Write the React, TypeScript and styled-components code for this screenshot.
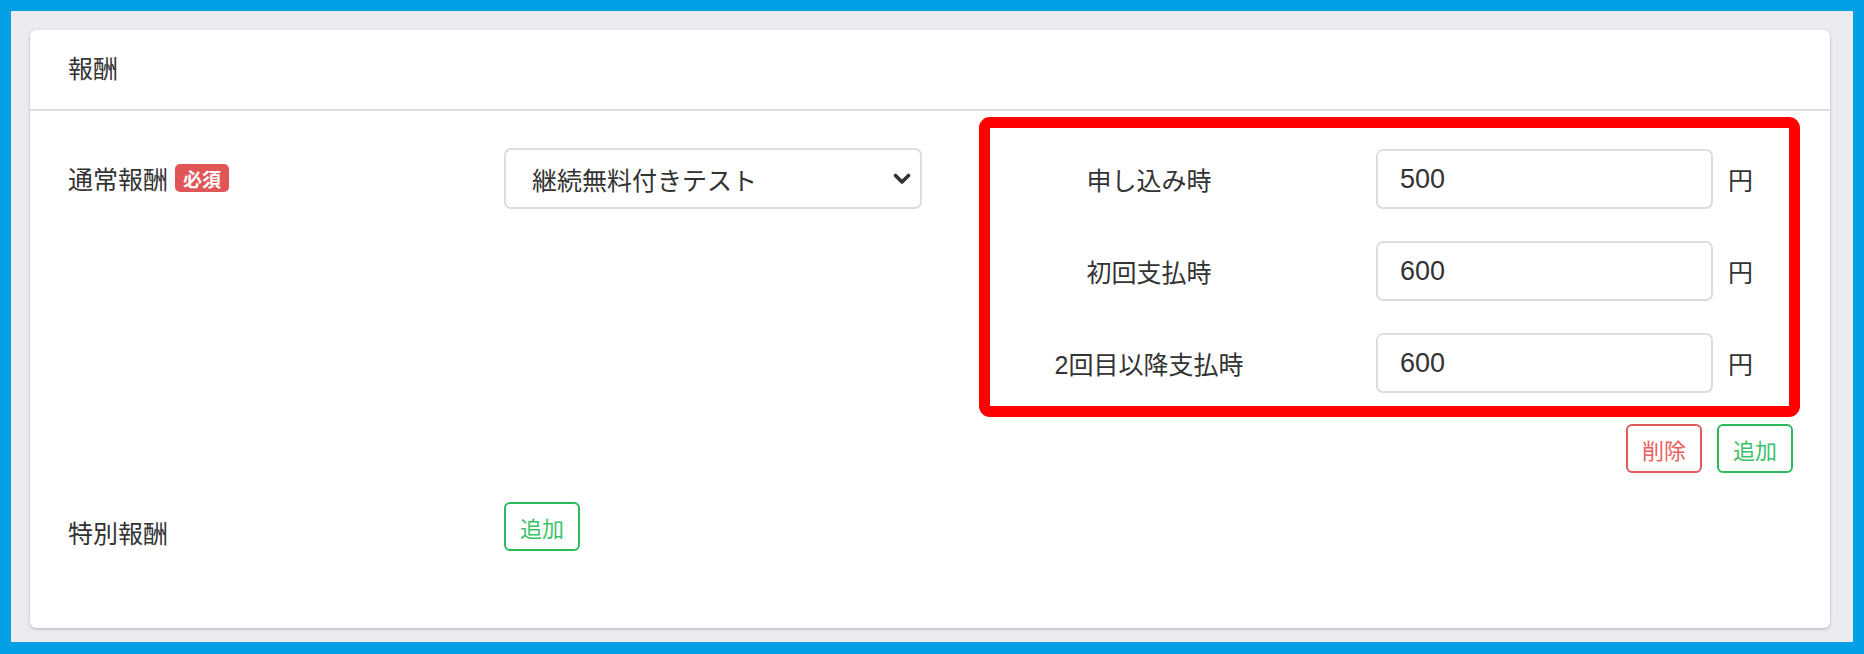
import styled, { createGlobalStyle } from 'styled-components';

const GlobalStyle = createGlobalStyle`
  html, body {
    margin: 0;
    padding: 0;
  }
  body {
    font-family: 'Liberation Sans', 'Noto Sans CJK JP', sans-serif;
    color: #333;
  }
  * {
    box-sizing: border-box;
  }
`;

// 外枠（青いフレーム）とグレーの背景
const Frame = styled.div`
  height: 654px;
  background: #03a0e6;
  padding: 11px 11px 12px 11px;
`;

const Page = styled.div`
  height: 100%;
  background: #ebecef;
  padding: 19px 23px 14px 19px;
`;

const Card = styled.section`
  background: #fff;
  border-radius: 6px;
  box-shadow: 0 1px 3px rgba(60, 70, 95, 0.35);
`;

const CardHeader = styled.header`
  height: 81px;
  padding: 0 38px;
  display: flex;
  align-items: center;
  border-bottom: 2px solid #dcdde2;
  font-size: 25px;
  line-height: 1;
  color: #333;
`;

const CardBody = styled.div`
  display: grid;
  grid-template-columns: 379px 418px 1fr;
  column-gap: 57px;
  row-gap: 29px;
  align-items: start;
  padding: 6px 37px 66px 38px;
`;

const FieldLabel = styled.div<{ $offset?: number }>`
  margin-top: ${({ $offset }) => $offset ?? 0}px;
  height: 60px;
  display: flex;
  align-items: center;
  font-size: 25px;
  color: #333;
  white-space: nowrap;
`;

const RequiredBadge = styled.span`
  display: inline-flex;
  align-items: center;
  height: 28px;
  margin-left: 7px;
  padding: 0 8px;
  border-radius: 5px;
  background: #e05656;
  color: #fff;
  font-size: 19px;
  font-weight: 700;
`;

const SelectBox = styled.div<{ $offset?: number }>`
  margin-top: ${({ $offset }) => $offset ?? 0}px;
  height: 61px;
  display: flex;
  align-items: center;
  justify-content: space-between;
  padding: 0 9px 0 26px;
  border: 2px solid #dcdce1;
  border-radius: 7px;
  background: #fff;
  font-size: 25px;
  color: #333;
  cursor: pointer;
`;

const DetailColumn = styled.div`
  display: flex;
  flex-direction: column;
`;

// 赤枠（注釈）
const Highlight = styled.div`
  margin-right: -7px;
  border: 11px solid #fe0000;
  border-radius: 11px;
  padding: 21px 0 13px 0;
  display: flex;
  flex-direction: column;
  gap: 32px;
`;

const AmountRow = styled.div`
  display: flex;
  align-items: center;
  height: 60px;
`;

const AmountLabel = styled.div`
  width: 318px;
  text-align: center;
  font-size: 25px;
  color: #333;
  white-space: nowrap;
`;

const AmountInput = styled.input`
  margin-left: 68px;
  width: 337px;
  height: 60px;
  padding: 0 22px;
  border: 2px solid #dcdce1;
  border-radius: 7px;
  font-family: 'Liberation Sans', sans-serif;
  font-size: 27px;
  color: #333;
  outline: none;
`;

const Unit = styled.span`
  margin-left: 15px;
  font-size: 25px;
  color: #333;
`;

const ButtonBar = styled.div`
  display: flex;
  justify-content: flex-end;
  gap: 15px;
  margin-top: 7px;
`;

const OutlineButton = styled.button<{ $tone: 'danger' | 'success' }>`
  height: 49px;
  padding: 0 14px;
  border: 2px solid ${({ $tone }) => ($tone === 'danger' ? '#e05a5a' : '#2dba5c')};
  border-radius: 6px;
  background: #fff;
  color: ${({ $tone }) => ($tone === 'danger' ? '#e8605e' : '#3cc26b')};
  font-family: 'Liberation Sans', 'Noto Sans CJK JP', sans-serif;
  font-size: 22px;
  cursor: pointer;
  justify-self: start;
`;

const Chevron = () => (
  <svg width="18" height="12" viewBox="0 0 18 12">
    <polyline
      points="2.5,2.5 9,9 15.5,2.5"
      fill="none"
      stroke="#333"
      strokeWidth="3.6"
      strokeLinecap="round"
      strokeLinejoin="round"
    />
  </svg>
);

const amounts = [
  { label: '申し込み時', value: '500' },
  { label: '初回支払時', value: '600' },
  { label: '2回目以降支払時', value: '600' },
];

export default function App() {
  return (
    <>
      <GlobalStyle />
      <Frame>
        <Page>
          <Card>
            <CardHeader>報酬</CardHeader>
            <CardBody>
              {/* 通常報酬 */}
              <FieldLabel $offset={31}>
                通常報酬
                <RequiredBadge>必須</RequiredBadge>
              </FieldLabel>
              <SelectBox $offset={31}>
                <span>継続無料付きテスト</span>
                <Chevron />
              </SelectBox>
              <DetailColumn>
                <Highlight>
                  {amounts.map((row) => (
                    <AmountRow key={row.label}>
                      <AmountLabel>{row.label}</AmountLabel>
                      <AmountInput defaultValue={row.value} />
                      <Unit>円</Unit>
                    </AmountRow>
                  ))}
                </Highlight>
                <ButtonBar>
                  <OutlineButton $tone="danger">削除</OutlineButton>
                  <OutlineButton $tone="success">追加</OutlineButton>
                </ButtonBar>
              </DetailColumn>

              {/* 特別報酬 */}
              <FieldLabel>特別報酬</FieldLabel>
              <OutlineButton $tone="success">追加</OutlineButton>
              <div />
            </CardBody>
          </Card>
        </Page>
      </Frame>
    </>
  );
}
